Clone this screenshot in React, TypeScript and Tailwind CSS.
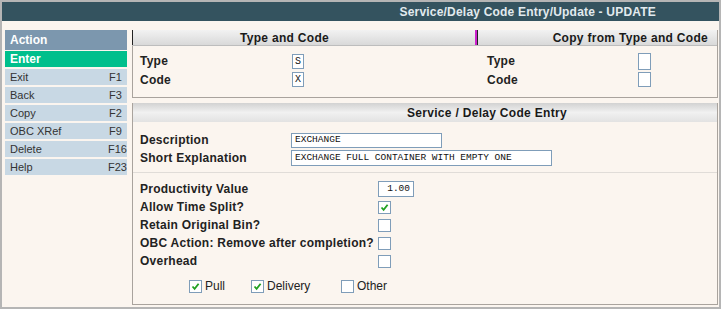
import React from "react";

const menu = [
  { label: "Exit", key: "F1" },
  { label: "Back", key: "F3" },
  { label: "Copy", key: "F2" },
  { label: "OBC XRef", key: "F9" },
  { label: "Delete", key: "F16" },
  { label: "Help", key: "F23" },
];

const Check = ({ checked }: { checked?: boolean }) => (
  <span className="w-[13px] h-[13px] border border-[#7f9db9] bg-white flex items-center justify-center shrink-0">
    {checked && (
      <svg width="9" height="9" viewBox="0 0 9 9">
        <path d="M1.5 4.5 L3.6 6.8 L7.6 1.8" fill="none" stroke="#21a121" strokeWidth="1.8" />
      </svg>
    )}
  </span>
);

const Field = ({ value, className }: { value: string; className: string }) => (
  <span
    className={
      "h-[15px] border border-[#7f9db9] bg-white flex items-center px-[3px] font-['Liberation_Mono'] text-[9.5px] text-[#111] shrink-0 " +
      className
    }
  >
    {value}
  </span>
);

const Label = ({ text, className }: { text: string; className: string }) => (
  <span
    className={
      "shrink-0 whitespace-nowrap font-bold text-[12px] tracking-[0.25px] text-[#222] " + className
    }
  >
    {text}
  </span>
);

const Row = ({ label, children }: { label: string; children?: React.ReactNode }) => (
  <div className="h-[18px] flex items-center">
    <Label text={label} className="w-[245px] pl-[7px]" />
    {children}
  </div>
);

const App = () => {
  return (
    <section className="w-[721px] h-[309px] border-2 border-[#b5b5b5] bg-[#fbf5ef] flex flex-col font-['Liberation_Sans',Arial,sans-serif]">
      <header className="h-[19px] bg-[#34535f] flex items-center justify-end pr-[63px] text-[12px] font-bold tracking-[0.2px] text-[#e2eaee]">
        Service/Delay Code Entry/Update - UPDATE
      </header>

      <div className="flex flex-1 pt-[9px] pl-[3px] pr-[1px] gap-[5px]">
        {/* side menu */}
        <aside className="w-[122px] flex flex-col">
          <div className="h-[20px] bg-[#7c97ae] text-white font-bold text-[12px] flex items-center pl-[5px]">
            Action
          </div>
          <div className="h-[16px] mt-[1px] bg-[#00bf8c] text-white font-bold text-[12px] flex items-center pl-[5px]">
            Enter
          </div>
          {menu.map((m) => (
            <div
              key={m.label}
              className="h-[16px] mt-[2px] bg-[#c8d8e4] text-[#333] text-[11px] flex items-center pl-[5px]"
            >
              <span className="w-[99px]">{m.label}</span>
              <span>{m.key}</span>
            </div>
          ))}
        </aside>

        <main className="flex-1 flex flex-col">
          {/* Type and Code */}
          <div className="h-[68px] flex flex-col border-r border-b border-[#a9a39d]">
            <div className="h-[16px] flex bg-gradient-to-b from-[#f2f2f2] to-[#d9d9d9] border-b border-[#bdbdbd] font-bold text-[12px] tracking-[0.3px] text-[#1a1a1a]">
              <div className="w-[343px] border-l border-[#222] flex items-center pl-[107px]">Type and Code</div>
              <div className="w-[2px] bg-[#cc22cc]" />
              <div className="flex-1 border-l border-[#222] flex items-center justify-end pr-[9px]">
                Copy from Type and Code
              </div>
            </div>
            <div className="flex-1 flex border-l border-[#a9a39d] pt-[6px]">
              <div className="w-[344px] flex flex-col">
                <div className="h-[18px] flex items-center">
                  <Label text="Type" className="w-[159px] pl-[7px]" />
                  <Field value="S" className="w-[12px] h-[14px] justify-center px-0 text-[10px]" />
                </div>
                <div className="h-[19px] flex items-center">
                  <Label text="Code" className="w-[159px] pl-[7px]" />
                  <Field value="X" className="w-[12px] h-[15px] justify-center px-0 text-[10px]" />
                </div>
              </div>
              <div className="flex-1 flex flex-col">
                <div className="h-[18px] flex items-center">
                  <Label text="Type" className="w-[161px] pl-[10px]" />
                  <Field value="" className="w-[13px] h-[17px]" />
                </div>
                <div className="h-[19px] flex items-center">
                  <Label text="Code" className="w-[161px] pl-[10px]" />
                  <Field value="" className="w-[13px] h-[15px]" />
                </div>
              </div>
            </div>
          </div>

          {/* Service / Delay Code Entry */}
          <div className="mt-[5px] h-[202px] flex flex-col border-l border-r border-b border-[#a9a39d]">
            <div className="h-[19px] flex items-center bg-gradient-to-b from-[#d2d2d2] via-[#f1f1f1] to-[#e2e2e2] pl-[274px] font-bold text-[12px] tracking-[0.3px] text-[#1a1a1a]">
              Service / Delay Code Entry
            </div>
            <div className="pt-[9px] pb-[5px] flex flex-col">
              <div className="h-[18px] flex items-center">
                <Label text="Description" className="w-[158px] pl-[7px]" />
                <Field value="EXCHANGE" className="w-[151px]" />
              </div>
              <div className="h-[18px] flex items-center">
                <Label text="Short Explanation" className="w-[158px] pl-[7px]" />
                <Field value="EXCHANGE FULL CONTAINER WITH EMPTY ONE" className="w-[261px] h-[16px]" />
              </div>
            </div>
            <div className="border-t border-[#e0dcd8] pt-[7px] flex flex-col">
              <Row label="Productivity Value">
                <Field value="1.00" className="w-[36px] h-[16px] justify-end" />
              </Row>
              <Row label="Allow Time Split?">
                <Check checked />
              </Row>
              <Row label="Retain Original Bin?">
                <Check />
              </Row>
              <Row label="OBC Action: Remove after completion?">
                <Check />
              </Row>
              <Row label="Overhead">
                <Check />
              </Row>
              <div className="mt-[7px] h-[18px] flex items-center pl-[56px] text-[12px] text-[#222]">
                <Check checked />
                <span className="ml-[3px] w-[46px]">Pull</span>
                <Check checked />
                <span className="ml-[3px] w-[74px]">Delivery</span>
                <Check />
                <span className="ml-[3px]">Other</span>
              </div>
            </div>
          </div>
        </main>
      </div>
    </section>
  );
};

export default App;
